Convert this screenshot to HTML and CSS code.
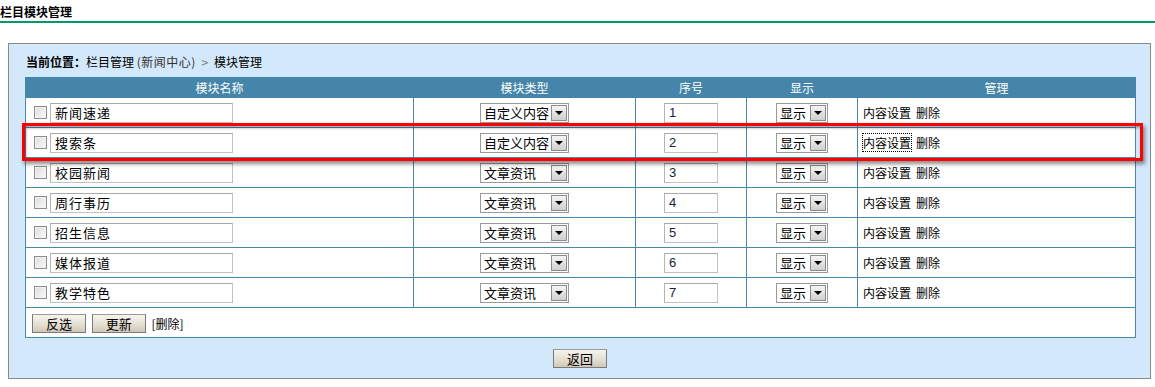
FILE: index.html
```html
<!DOCTYPE html>
<html>
<head>
    <meta charset="utf-8">
    <title>栏目模块管理</title>
    <link rel="stylesheet" href="styles.css">
</head>
<body>
    <div class="page-title">栏目模块管理</div>

    <div class="main-box">
        <div class="crumb"><b>当前位置：</b>栏目管理 <span class="dim">(新闻中心)</span> <span class="gt">&gt;</span> 模块管理</div>

        <div class="table-wrap">
            <table class="grid">
                <thead>
                    <tr>
                        <th class="c-name">模块名称</th>
                        <th class="c-type">模块类型</th>
                        <th class="c-order">序号</th>
                        <th class="c-show">显示</th>
                        <th class="c-manage">管理</th>
                    </tr>
                </thead>
                <tbody>
                    <tr>
                        <td><span class="chk"></span><span class="txt name">新闻速递</span></td>
                        <td class="center"><span class="sel type">自定义内容<span class="arrow"></span></span></td>
                        <td class="center"><span class="txt order">1</span></td>
                        <td class="center"><span class="sel show">显示<span class="arrow"></span></span></td>
                        <td class="manage"><span>内容设置</span><span class="del">删除</span></td>
                    </tr>
                    <tr>
                        <td><span class="chk"></span><span class="txt name">搜索条</span></td>
                        <td class="center"><span class="sel type">自定义内容<span class="arrow"></span></span></td>
                        <td class="center"><span class="txt order">2</span></td>
                        <td class="center"><span class="sel show">显示<span class="arrow"></span></span></td>
                        <td class="manage"><span class="focused">内容设置</span><span class="del">删除</span></td>
                    </tr>
                    <tr>
                        <td><span class="chk"></span><span class="txt name">校园新闻</span></td>
                        <td class="center"><span class="sel type">文章资讯<span class="arrow"></span></span></td>
                        <td class="center"><span class="txt order">3</span></td>
                        <td class="center"><span class="sel show">显示<span class="arrow"></span></span></td>
                        <td class="manage"><span>内容设置</span><span class="del">删除</span></td>
                    </tr>
                    <tr>
                        <td><span class="chk"></span><span class="txt name">周行事历</span></td>
                        <td class="center"><span class="sel type">文章资讯<span class="arrow"></span></span></td>
                        <td class="center"><span class="txt order">4</span></td>
                        <td class="center"><span class="sel show">显示<span class="arrow"></span></span></td>
                        <td class="manage"><span>内容设置</span><span class="del">删除</span></td>
                    </tr>
                    <tr>
                        <td><span class="chk"></span><span class="txt name">招生信息</span></td>
                        <td class="center"><span class="sel type">文章资讯<span class="arrow"></span></span></td>
                        <td class="center"><span class="txt order">5</span></td>
                        <td class="center"><span class="sel show">显示<span class="arrow"></span></span></td>
                        <td class="manage"><span>内容设置</span><span class="del">删除</span></td>
                    </tr>
                    <tr>
                        <td><span class="chk"></span><span class="txt name">媒体报道</span></td>
                        <td class="center"><span class="sel type">文章资讯<span class="arrow"></span></span></td>
                        <td class="center"><span class="txt order">6</span></td>
                        <td class="center"><span class="sel show">显示<span class="arrow"></span></span></td>
                        <td class="manage"><span>内容设置</span><span class="del">删除</span></td>
                    </tr>
                    <tr>
                        <td><span class="chk"></span><span class="txt name">教学特色</span></td>
                        <td class="center"><span class="sel type">文章资讯<span class="arrow"></span></span></td>
                        <td class="center"><span class="txt order">7</span></td>
                        <td class="center"><span class="sel show">显示<span class="arrow"></span></span></td>
                        <td class="manage"><span>内容设置</span><span class="del">删除</span></td>
                    </tr>
                    <tr class="foot">
                        <td colspan="5">
                            <span class="btn">反选</span>
                            <span class="btn">更新</span>
                            <span class="link">[删除]</span>
                        </td>
                    </tr>
                </tbody>
            </table>
            <!-- highlight frame drawn over the second row -->
            <div class="highlight"></div>
        </div>

        <div class="actions">
            <span class="btn">返回</span>
        </div>
    </div>
</body>
</html>
```

FILE: styles.css
```css
:root {
    --head-color: #4585a9;
    --line-color: #4a88ab;
    --box-bg: #d3e8fa;
    --box-border: #8a8a8a;
    --green: #009a6a;
}

* {
    box-sizing: border-box;
    margin: 0;
    padding: 0;
}

body {
    font-family: "Noto Sans CJK SC", "Liberation Sans", sans-serif;
    font-size: 12px;
    color: #000;
    background: #fff;
    width: 1155px;
}

.page-title {
    height: 23px;
    padding-top: 4px;
    line-height: 16px;
    font-weight: bold;
    border-bottom: 2px solid var(--green);
}

.main-box {
    margin: 20px 4px 0 8px;
    background: var(--box-bg);
    border: 1px solid var(--box-border);
    padding: 7px 15px 10px 16px;
}

.crumb {
    height: 22px;
    line-height: 22px;
    margin-bottom: 4px;
    padding-left: 1px;
}

.crumb b {
    font-weight: bold;
}

.crumb .dim {
    color: #333;
    letter-spacing: 0.5px;
}

.crumb .gt {
    color: #777;
    margin: 0 3px;
}

.table-wrap {
    position: relative;
    width: 1110px;
}

.grid {
    width: 1110px;
    border-collapse: collapse;
    background: #fff;
    table-layout: fixed;
}

.grid th {
    background: var(--head-color);
    color: #fff;
    font-weight: normal;
    height: 19px;
    line-height: 19px;
    padding: 0;
    border: 1px solid var(--head-color);
}

.c-name { width: 388px; }
.c-type { width: 222px; }
.c-order { width: 111px; }
.c-show { width: 111px; }
.c-manage { width: 278px; }

.grid td {
    height: 30px;
    border: 1px solid var(--line-color);
    padding: 0 0 0 9px;
    vertical-align: middle;
    white-space: nowrap;
}

.grid td.center {
    padding: 0;
    text-align: center;
}

.grid td.manage {
    padding-left: 5px;
}

.del {
    margin-left: 5px;
}

.chk {
    display: inline-block;
    width: 13px;
    height: 13px;
    border: 1px solid #8d8d8d;
    background: linear-gradient(135deg, #dcdcdc, #fafafa);
    box-shadow: inset 0 0 0 1px #f2f2f2;
    vertical-align: middle;
    margin-right: 3px;
    margin-left: -1px;
}

.txt {
    display: inline-block;
    height: 20px;
    line-height: 18px;
    border: 1px solid #c2c2c2;
    border-top-color: #a9a9a9;
    border-left-color: #b4b4b4;
    background: #fff;
    padding-left: 4px;
    vertical-align: middle;
    text-align: left;
    font-size: 13px;
}

.txt.name {
    width: 183px;
    letter-spacing: 1px;
}

.txt.order {
    width: 54px;
    font-family: "Liberation Sans", sans-serif;
    color: #1a1a40;
}

.sel {
    display: inline-flex;
    align-items: center;
    justify-content: space-between;
    height: 20px;
    border: 1px solid #9a9a9a;
    background: #fff;
    padding: 0 1px 0 3px;
    vertical-align: middle;
    font-size: 13px;
}

.sel.type {
    width: 89px;
}

.sel.show {
    width: 52px;
}

.arrow {
    position: relative;
    width: 16px;
    height: 16px;
    border: 1px solid #8a8a8a;
    background: linear-gradient(#f4f4f4, #cfcfcf);
}

.arrow::after {
    content: "";
    position: absolute;
    left: 3px;
    top: 5px;
    border-left: 4px solid transparent;
    border-right: 4px solid transparent;
    border-top: 4px solid #000;
}

.focused {
    outline: 1px dotted #000;
}

.foot td {
    padding-left: 6px;
}

.btn {
    display: inline-block;
    width: 54px;
    height: 19px;
    line-height: 17px;
    text-align: center;
    border: 1px solid #7a7a7a;
    border-top-color: #9a9a9a;
    background: linear-gradient(#f6f4ee, #e2ddd1 60%, #cfc8b8);
    font-size: 13px;
    vertical-align: middle;
}

.foot .btn + .btn {
    margin-left: 3px;
}

.link {
    margin-left: 3px;
    vertical-align: middle;
}

.highlight {
    position: absolute;
    left: -3px;
    top: 46px;
    width: 1121px;
    height: 38px;
    border: 3px solid #f00;
    box-shadow: 2px 3px 4px rgba(0, 0, 0, 0.45), inset 1px 2px 3px rgba(0, 0, 0, 0.35);
    pointer-events: none;
}

.actions {
    margin-top: 10px;
    text-align: center;
}
```
